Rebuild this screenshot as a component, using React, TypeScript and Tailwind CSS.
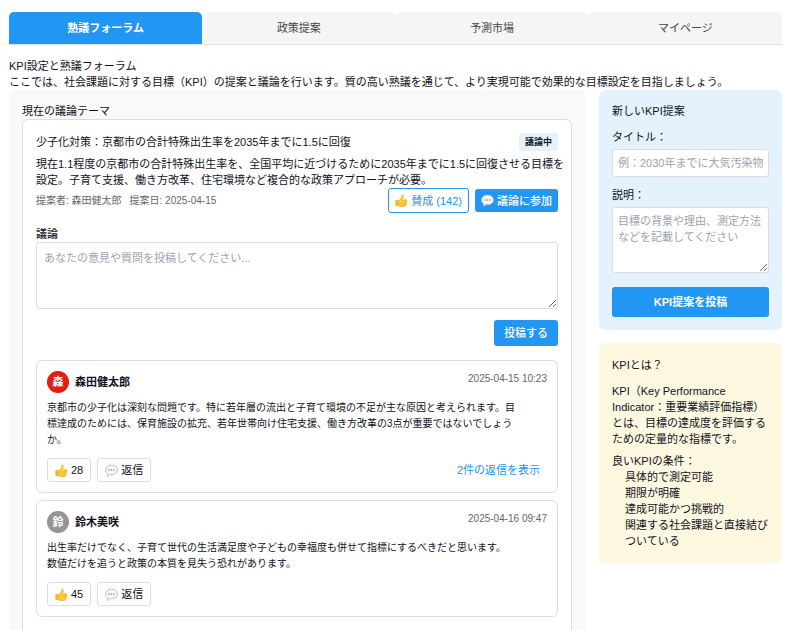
import React, { useState } from 'react';
import clsx from 'clsx';

interface Comment {
  id: number;
  author: string;
  initial: string;
  avatarClass: string;
  date: string;
  body: string[];
  likes: number;
  replies: number;
}

const TABS = ['熟議フォーラム', '政策提案', '予測市場', 'マイページ'];

const CONDITIONS = [
  '具体的で測定可能',
  '期限が明確',
  '達成可能かつ挑戦的',
  '関連する社会課題と直接結びついている'
];

const COMMENTS: Comment[] = [
  {
    id: 1,
    author: '森田健太郎',
    initial: '森',
    avatarClass: 'bg-[#e51c13]',
    date: '2025-04-15 10:23',
    body: [
      '京都市の少子化は深刻な問題です。特に若年層の流出と子育て環境の不足が主な原因と考えられます。目',
      '標達成のためには、保育施設の拡充、若年世帯向け住宅支援、働き方改革の3点が重要ではないでしょう',
      'か。'
    ],
    likes: 28,
    replies: 2
  },
  {
    id: 2,
    author: '鈴木美咲',
    initial: '鈴',
    avatarClass: 'bg-[#969593]',
    date: '2025-04-16 09:47',
    body: [
      '出生率だけでなく、子育て世代の生活満足度や子どもの幸福度も併せて指標にするべきだと思います。',
      '数値だけを追うと政策の本質を見失う恐れがあります。'
    ],
    likes: 45,
    replies: 0
  }
];

const ThumbIcon = () => (
  <svg viewBox="0 0 24 24" className="size-[13px] shrink-0" aria-hidden="true">
    <path
      d="M1 12.5C1 11.500 1.700 11 2.600 11H7c2-1.200 3.500-3.300 4.200-5.500.4-1.400.1-3.600 1.200-4.300 1.200-.8 3 0 3.500 1.400.7 2 .1 4.700-.9 7.200h5.400c1.500 0 2.400 1 2.300 2.100-.1.900-.6 1.400-1.100 1.600.9.400 1.300 1.200 1.200 2.100-.1.900-.8 1.600-1.600 1.800.5.500.7 1.100.5 1.900-.2.900-.9 1.400-1.700 1.500.2.400.3.800.1 1.300-.4 1-1.300 1.400-2.400 1.400H11.500c-2 0-3.500-.4-5-1.200H2.600C1.700 22.300 1 21.800 1 20.800Z"
      fill="#fec83a"
    />
    <path d="M1 12.500C1 11.500 1.700 11 2.600 11H6.500v11.300H2.600C1.700 22.300 1 21.800 1 20.800Z" fill="#f8b334" />
    <path d="M15.500 13.400h6M15.500 17h5.500M15.500 20.400h4" stroke="#e9a02a" strokeWidth="1" fill="none" />
    <path d="M7 22.200c1.500.8 3 1.300 4.800 1.300h6" stroke="#e9a02a" strokeWidth="1" fill="none" />
  </svg>
);

const BubbleIcon = () => (
  <svg viewBox="0 0 24 24" className="size-[13px] shrink-0" aria-hidden="true">
    <path
      d="M12 2c6.200 0 11 3.900 11 8.900s-4.800 8.900-11 8.900c-1 0-2-.1-2.900-.3-1.300 1.700-3 2.800-5.300 3.300 1-1.300 1.400-2.900 1.200-4.700C2.500 16.500 1 13.900 1 10.900 1 5.900 5.800 2 12 2Z"
      fill="#f7f7f7"
      stroke="#b4b4b4"
      strokeWidth="1.500"
    />
    <circle cx="7.500" cy="11" r="1.300" fill="#777" />
    <circle cx="12" cy="11" r="1.300" fill="#777" />
    <circle cx="16.500" cy="11" r="1.300" fill="#777" />
  </svg>
);

const CommentCard: React.FC<{ comment: Comment }> = ({ comment }) => (
  <article className="rounded-md border border-[#ddd] bg-white p-[10px]">
    <div className="flex items-start justify-between">
      <div className="flex items-center gap-[6px]">
        <span
          className={clsx(
            'flex size-[22px] items-center justify-center rounded-full font-bold text-white',
            comment.avatarClass
          )}
        >
          {comment.initial}
        </span>
        <span className="font-bold">{comment.author}</span>
      </div>
      <time className="text-[10px] text-[#666]">{comment.date}</time>
    </div>

    <p className="mt-[7px] text-[10px] whitespace-nowrap">
      {comment.body.map((line) => (
        <span key={line} className="block">
          {line}
        </span>
      ))}
    </p>

    <div className="mt-[10px] flex items-center gap-[6px]">
      <button type="button" className="flex h-6 items-center gap-[3px] rounded-[3px] border border-[#ddd] px-[7px]">
        <ThumbIcon />
        {comment.likes}
      </button>
      <button type="button" className="flex h-6 items-center gap-[3px] rounded-[3px] border border-[#ddd] px-[7px]">
        <BubbleIcon />
        返信
      </button>
      {comment.replies > 0 && (
        <button type="button" className="ml-auto px-[7px] text-[#2196f3]">
          {comment.replies}件の返信を表示
        </button>
      )}
    </div>
  </article>
);

const ProposalForm = () => {
  const [title, setTitle] = useState('');
  const [description, setDescription] = useState('');

  return (
    <form onSubmit={(e) => e.preventDefault()} className="rounded-md bg-[#e3f2fd] p-[13px]">
      <h2>新しいKPI提案</h2>
      <label htmlFor="title" className="mt-[10px] block">
        タイトル：
      </label>
      <input
        id="title"
        type="text"
        value={title}
        onChange={(e) => setTitle(e.target.value)}
        placeholder="例：2030年までに大気汚染物質を"
        className="mt-1 block h-7 w-full rounded-[3px] border border-[#ddd] bg-white px-[5px] placeholder:text-[#9ca3af]"
      />
      <label htmlFor="description" className="mt-[10px] block">
        説明：
      </label>
      <textarea
        id="description"
        value={description}
        onChange={(e) => setDescription(e.target.value)}
        placeholder="目標の背景や理由、測定方法などを記載してください"
        className="mt-1 block h-[66px] w-full rounded-[3px] border border-[#ddd] bg-white p-[5px] placeholder:text-[#9ca3af]"
      />
      <button type="submit" className="mt-[14px] h-[30px] w-full rounded-[3px] bg-[#2196f3] font-bold text-white">
        KPI提案を投稿
      </button>
    </form>
  );
};

const App: React.FC = () => {
  const [activeTab, setActiveTab] = useState(TABS[0]);
  const [opinion, setOpinion] = useState('');

  return (
    <div
      lang="ja"
      className="bg-white pt-3 pr-[13px] pl-[9px] font-['Liberation_Sans','Noto_Sans_CJK_JP',sans-serif] text-[11px] leading-4 text-[#0f1222]"
    >
      <nav className="grid grid-cols-4 border-b border-[#ddd]">
        {TABS.map((tab) => (
          <button
            key={tab}
            type="button"
            onClick={() => setActiveTab(tab)}
            className={clsx(
              'h-8 rounded-t-[5px]',
              tab === activeTab ? 'bg-[#2196f3] font-bold text-white' : 'bg-[#f5f5f5] text-[#444]'
            )}
          >
            {tab}
          </button>
        ))}
      </nav>

      <header className="mt-[13px]">
        <h1>KPI設定と熟議フォーラム</h1>
        <p>
          ここでは、社会課題に対する目標（KPI）の提案と議論を行います。質の高い熟議を通じて、より実現可能で効果的な目標設定を目指しましょう。
        </p>
      </header>

      <div className="grid grid-cols-[minmax(0,1fr)_183px] gap-[13px]">
        <main className="rounded-md bg-[#f9f9f9] p-[13px] pr-[14px]">
          <h2>現在の議論テーマ</h2>

          <section className="rounded-md border border-[#ddd] bg-white p-[13px] pb-8">
            <div className="flex items-center justify-between">
              <h3>少子化対策：京都市の合計特殊出生率を2035年までに1.5に回復</h3>
              <span className="rounded-[3px] bg-[#e3f2fd] px-[6px] py-px text-[9px] font-bold">議論中</span>
            </div>

            <p className="mt-[5px] -mr-2">
              現在1.1程度の京都市の合計特殊出生率を、全国平均に近づけるために2035年までに1.5に回復させる目標を
              <br />
              設定。子育て支援、働き方改革、住宅環境など複合的な政策アプローチが必要。
            </p>

            <div className="flex items-center justify-between">
              <div className="flex gap-2 text-[10px] text-[#666]">
                <span>提案者: 森田健太郎</span>
                <span>提案日: 2025-04-15</span>
              </div>
              <div className="flex items-center gap-[6px]">
                <button
                  type="button"
                  className="flex h-[25px] items-center gap-[3px] rounded-[3px] border border-[#2196f3] px-[6px] text-[#2196f3]"
                >
                  <ThumbIcon />
                  賛成 (142)
                </button>
                <button
                  type="button"
                  className="flex h-[23px] items-center gap-[3px] rounded-[3px] bg-[#2196f3] px-[6px] font-medium text-white"
                >
                  <BubbleIcon />
                  議論に参加
                </button>
              </div>
            </div>

            <form onSubmit={(e) => e.preventDefault()} className="mt-[13px]">
              <label htmlFor="opinion" className="block font-medium">
                議論
              </label>
              <textarea
                id="opinion"
                value={opinion}
                onChange={(e) => setOpinion(e.target.value)}
                placeholder="あなたの意見や質問を投稿してください..."
                className="block h-[67px] w-full rounded-[3px] border border-[#ddd] p-[7px] placeholder:text-[#9ca3af]"
              />
              <button
                type="submit"
                className="mt-[11px] ml-auto block h-[26px] rounded-[3px] bg-[#2196f3] px-[10px] font-medium text-white"
              >
                投稿する
              </button>
            </form>

            <div className="mt-[14px] flex flex-col gap-[7px]">
              {COMMENTS.map((comment) => (
                <CommentCard key={comment.id} comment={comment} />
              ))}
            </div>
          </section>
        </main>

        <aside className="flex flex-col gap-[13px]">
          <ProposalForm />

          <section className="rounded-md bg-[#fff8e1] px-[13px] py-[14px]">
            <h2>KPIとは？</h2>
            <p className="mt-[10px]">
              KPI（Key Performance Indicator：重要業績評価指標）とは、目標の達成度を評価するための定量的な指標です。
            </p>
            <p className="mt-[6px]">良いKPIの条件：</p>
            <ul className="pl-[13px]">
              {CONDITIONS.map((condition) => (
                <li key={condition}>{condition}</li>
              ))}
            </ul>
          </section>
        </aside>
      </div>
    </div>
  );
};

export default App;
